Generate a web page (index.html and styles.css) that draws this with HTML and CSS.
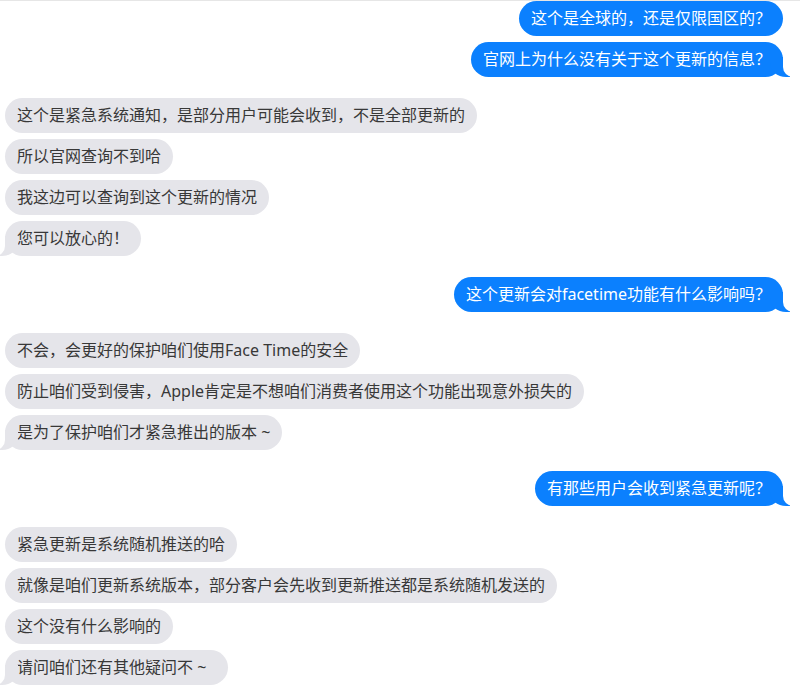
FILE: index.html
```html
<!DOCTYPE html>
<html>
<head>
    <meta charset="utf-8">
    <title>Chat</title>
    <link rel="stylesheet" href="styles.css">
</head>
<body>
<div class="chat">
    <div class="group me">
        <p class="msg">这个是全球的，还是仅限国区的？</p>
        <p class="msg">官网上为什么没有关于这个更新的信息？</p>
    </div>
    <div class="group them">
        <p class="msg">这个是紧急系统通知，是部分用户可能会收到，不是全部更新的</p>
        <p class="msg">所以官网查询不到哈</p>
        <p class="msg">我这边可以查询到这个更新的情况</p>
        <p class="msg">您可以放心的！</p>
    </div>
    <div class="group me">
        <p class="msg">这个更新会对facetime功能有什么影响吗？</p>
    </div>
    <div class="group them">
        <p class="msg">不会，会更好的保护咱们使用Face Time的安全</p>
        <p class="msg">防止咱们受到侵害，Apple肯定是不想咱们消费者使用这个功能出现意外损失的</p>
        <p class="msg">是为了保护咱们才紧急推出的版本 ~</p>
    </div>
    <div class="group me">
        <p class="msg">有那些用户会收到紧急更新呢？</p>
    </div>
    <div class="group them">
        <p class="msg">紧急更新是系统随机推送的哈</p>
        <p class="msg">就像是咱们更新系统版本，部分客户会先收到更新推送都是系统随机发送的</p>
        <p class="msg">这个没有什么影响的</p>
        <p class="msg wide">请问咱们还有其他疑问不 ~</p>
    </div>
</div>
</body>
</html>
```
FILE: styles.css
```css
* {
    box-sizing: border-box;
}

html, body {
    margin: 0;
    padding: 0;
    background: #fff;
}

body {
    border-top: 1px solid #e6e6e6;
    font-family: "Noto Sans", "Noto Sans CJK SC", sans-serif;
    font-size: 16px;
}

.chat {
    display: flex;
    flex-direction: column;
    gap: 21px;
    padding: 0 17px 0 5px;
}

.group {
    display: flex;
    flex-direction: column;
    gap: 6px;
}

.me {
    align-items: flex-end;
}

.them {
    align-items: flex-start;
}

.msg {
    position: relative;
    margin: 0;
    height: 35px;
    padding: 0 12px;
    line-height: 35px;
    border-radius: 18px;
    white-space: nowrap;
}

.msg.wide {
    padding-right: 22px;
}

.me .msg {
    background: #0b80fe;
    color: #fff;
}

.them .msg {
    background: #e5e5ea;
    color: #383838;
}

/* tails on the last bubble of each group */
.msg:last-child:before,
.msg:last-child:after {
    content: "";
    position: absolute;
    bottom: 0;
    height: 20px;
}

.me .msg:last-child:before {
    right: -7px;
    width: 20px;
    background: #0b80fe;
    border-bottom-left-radius: 16px 14px;
}

.me .msg:last-child:after {
    right: -26px;
    width: 26px;
    background: #fff;
    border-bottom-left-radius: 10px;
}

.them .msg:last-child:before {
    left: -7px;
    width: 20px;
    background: #e5e5ea;
    border-bottom-right-radius: 16px 14px;
}

.them .msg:last-child:after {
    left: -26px;
    width: 26px;
    background: #fff;
    border-bottom-right-radius: 10px;
}
```
